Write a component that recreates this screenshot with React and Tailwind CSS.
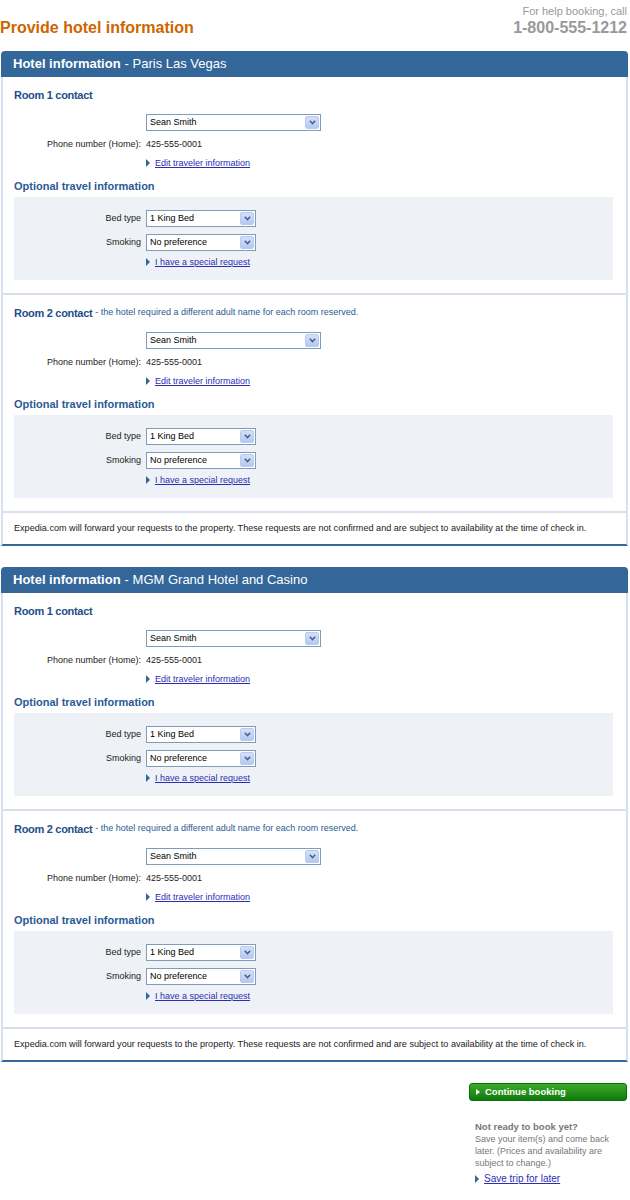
import React from 'react';

const hotels = ['Paris Las Vegas', 'MGM Grand Hotel and Casino'];

// Fake XP-style dropdown with the pale blue arrow button
const SelectBox = ({ value, width }) => (
  <div
    className="h-[17px] border border-[#7f9db9] bg-white flex items-center justify-between pl-[3px] pr-[1px]"
    style={{ width }}
  >
    <span className="text-[9px] leading-none text-black">{value}</span>
    <span className="w-[14px] h-[13px] rounded-[2px] bg-gradient-to-b from-[#d3e0fa] to-[#b3c9f1] border border-[#b8cbef] flex items-center justify-center">
      <svg width="7" height="5" viewBox="0 0 7 5">
        <path d="M0.8 0.8 L3.5 3.6 L6.2 0.8" fill="none" stroke="#4d6185" strokeWidth="1.5" />
      </svg>
    </span>
  </div>
);

const ArrowLink = ({ children, big }) => (
  <span className="flex items-center gap-[5px]">
    <span className="w-0 h-0 border-y-[4px] border-y-transparent border-l-[4px] border-l-[#336699]" />
    <a
      href="#"
      className={`${big ? 'text-[10px]' : 'text-[9px]'} leading-none text-[#2d2db4] underline`}
    >
      {children}
    </a>
  </span>
);

const Row = ({ label, children, className = '' }) => (
  <div className={`flex items-center ${className}`}>
    <div className="w-[132px] text-right text-[9px] leading-none text-[#222] pr-[5px] shrink-0">{label}</div>
    {children}
  </div>
);

const RoomSection = ({ room }) => (
  <div className="pt-[11px] pb-[13px] pl-[11px] pr-[13px] border-b-2 border-[#d6e1ed]">
    <div className="h-[14px] flex items-center">
      <span className="text-[11px] font-bold text-[#1d4f8a] tracking-[-0.3px]">Room {room} contact</span>
      {room === 2 && (
        <span className="text-[9px] text-[#2a5a96] ml-[3px]">
          - the hotel required a different adult name for each room reserved.
        </span>
      )}
    </div>
    <Row className="mt-[12px] h-[17px]">
      <SelectBox value="Sean Smith" width={175} />
    </Row>
    <Row label="Phone number (Home):" className="mt-[6px] h-[14px]">
      <span className="text-[9px] leading-none text-[#222]">425-555-0001</span>
    </Row>
    <Row className="mt-[5px] h-[14px]">
      <ArrowLink>Edit traveler information</ArrowLink>
    </Row>
    <div className="mt-[9px] h-[14px] flex items-center text-[11px] font-bold text-[#2a5a96]">
      Optional travel information
    </div>
    <div className="mt-[4px] bg-[#eef2f6] pt-[13px] pb-[11px]">
      <Row label="Bed type" className="h-[17px]">
        <SelectBox value="1 King Bed" width={110} />
      </Row>
      <Row label="Smoking" className="mt-[7px] h-[17px]">
        <SelectBox value="No preference" width={110} />
      </Row>
      <Row className="mt-[4px] h-[14px]">
        <ArrowLink>I have a special request</ArrowLink>
      </Row>
    </div>
  </div>
);

const HotelPanel = ({ name }) => (
  <section className="ml-[1px] w-[627px]">
    <header className="h-[26px] rounded-t-[4px] bg-[#336699] flex items-center pl-[12px] text-white text-[13px]">
      <span className="font-bold">Hotel information</span>
      <span className="ml-[4px]">- {name}</span>
    </header>
    <div className="border-x-2 border-[#d6e1ed] border-b-2 border-b-[#336699]">
      <RoomSection room={1} />
      <RoomSection room={2} />
      <p className="pt-[8px] pb-[9px] pl-[11px] h-[31px] flex items-center text-[9.1px] leading-[14px] text-[#222]">
        Expedia.com will forward your requests to the property. These requests are not confirmed and are subject to availability at the time of check in.
      </p>
    </div>
  </section>
);

export default function App() {
  return (
    <div className="w-[630px] bg-white font-['Liberation_Sans',Arial,sans-serif] pb-[20px]">
      <div className="h-[51px] flex items-end justify-between pb-[13px]">
        <h1 className="text-[16px] leading-[20px] font-bold text-[#cc6600]">Provide hotel information</h1>
        <div className="text-right pr-[3px] text-[#999]">
          <div className="text-[11px] leading-[13px]">For help booking, call</div>
          <div className="text-[16px] leading-[20px] font-bold">1-800-555-1212</div>
        </div>
      </div>

      <div className="flex flex-col gap-[21px]">
        {hotels.map((h) => (
          <HotelPanel key={h} name={h} />
        ))}
      </div>

      <div className="mt-[21px] flex flex-col items-end pr-[3px]">
        <button className="w-[158px] h-[18px] rounded-[3px] border border-[#0b6e0b] bg-gradient-to-b from-[#3bab2a] to-[#0c7a0a] flex items-center gap-[5px] pl-[6px] text-white text-[9.5px] font-bold">
          <span className="w-0 h-0 border-y-[3px] border-y-transparent border-l-[4px] border-l-white" />
          Continue booking
        </button>
        <div className="w-[158px] pl-[6px] pr-[2px] mt-[20px] text-[9px] leading-[12px] text-[#777]">
          <div className="font-bold text-[9.5px]">Not ready to book yet?</div>
          <div className="pr-[10px]">Save your item(s) and come back later. (Prices and availability are subject to change.)</div>
          <div className="mt-[3px] h-[14px] flex items-center">
            <ArrowLink big>Save trip for later</ArrowLink>
          </div>
        </div>
      </div>
    </div>
  );
}
